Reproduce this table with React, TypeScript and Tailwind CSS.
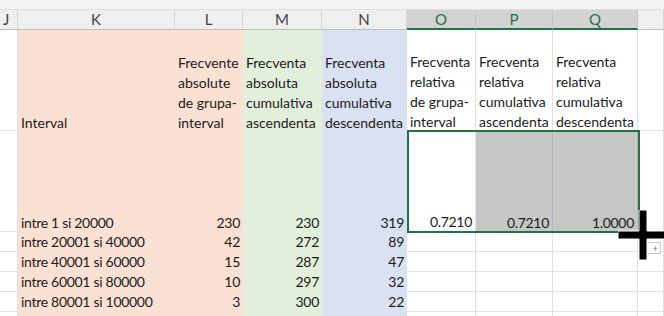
import React from 'react';

const cols = ['J', 'K', 'L', 'M', 'N', 'O', 'P', 'Q', ''];
const selectedCols = ['O', 'P', 'Q'];

const headers: Record<string, string[]> = {
	L: ['Frecvente', 'absolute', 'de grupa-', 'interval'],
	M: ['Frecventa', 'absoluta', 'cumulativa', 'ascendenta'],
	N: ['Frecventa', 'absoluta', 'cumulativa', 'descendenta'],
	O: ['Frecventa', 'relativa', 'de grupa-', 'interval'],
	P: ['Frecventa', 'relativa', 'cumulativa', 'ascendenta'],
	Q: ['Frecventa', 'relativa', 'cumulativa', 'descendenta']
};

const rows = [
	['intre 20001 si 40000', '42', '272', '89'],
	['intre 40001 si 60000', '15', '287', '47'],
	['intre 60001 si 80000', '10', '297', '32'],
	['intre 80001 si 100000', '3', '300', '22'],
	['', '', '', '']
];

const fill: Record<string, string> = {
	K: 'bg-[#fbe1d4]',
	L: 'bg-[#fbe1d4]',
	M: 'bg-[#e2efda]',
	N: 'bg-[#d9e1f2]'
};

function Cell({ col, children, right, gray, h }: { col: string; children?: React.ReactNode; right?: boolean; gray?: boolean; h: string }) {
	const colored = fill[col];
	let cls = colored ? colored : 'bg-white border-r border-b border-[#e1e1e1]';
	if (gray) cls = 'bg-[#c6c6c6] border-r border-[#b8b8b8]';
	return (
		<div className={`${h} ${cls} flex items-end overflow-hidden px-[3px] leading-[20px] whitespace-nowrap ${right ? 'justify-end' : 'justify-start'}`}>
			{children}
		</div>
	);
}

export default function App() {
	return (
		<div className="relative w-[664px] h-[316px] overflow-hidden bg-white text-[14px] text-[#1b1b1b]" style={{ fontFamily: 'Lato, "Open Sans", sans-serif' }}>
			<div className="h-[10px] bg-[#f4f4f4] border-b border-[#dedede]" />
			<div className="grid grid-cols-[18px_157px_68px_79px_85px_69px_77px_85px_26px]">
				{cols.map((c, i) => {
					const sel = selectedCols.includes(c);
					return (
						<div
							key={'h' + i}
							className={`h-[20px] flex items-center justify-center text-[15px] ${
								sel ? 'bg-[#d3d3d3] text-[#217346] border-b-2 border-[#217346] border-r border-r-[#c4c4c4]' : 'bg-[#efefef] text-[#444] border-b border-[#bdbdbd] border-r border-r-[#d6d6d6]'
							} ${i === 0 ? 'justify-start pl-[3px]' : ''}`}
						>
							{c}
						</div>
					);
				})}

				{cols.map((c, i) => (
					<Cell key={'a' + i} col={c} h="h-[101px]">
						{c === 'K' && <div className="translate-y-[2px]">Interval</div>}
						{headers[c] && (
							<div className="translate-y-[2px]">
								{headers[c].map((t) => (
									<div key={t}>{t}</div>
								))}
							</div>
						)}
					</Cell>
				))}

				{cols.map((c, i) => {
					const vals: Record<string, string> = { K: 'intre 1 si 20000', L: '230', M: '230', N: '319', O: '0.7210', P: '0.7210', Q: '1.0000' };
					return (
						<Cell key={'b' + i} col={c} h="h-[101px]" right={c !== 'K'} gray={c === 'P' || c === 'Q'}>
							<span className="tracking-[-0.3px] translate-y-[1px]">{vals[c]}</span>
						</Cell>
					);
				})}

				{rows.map((r, ri) =>
					cols.map((c, i) => {
						let v = '';
						if (c === 'K') v = r[0];
						if (c === 'L') v = r[1];
						if (c === 'M') v = r[2];
						if (c === 'N') v = r[3];
						return (
							<Cell key={ri + '-' + i} col={c} h="h-[20px]" right={c !== 'K'}>
								<span className="tracking-[-0.3px]">{v}</span>
							</Cell>
						);
					})
				)}
			</div>

			{/* selection */}
			<div className="absolute left-[407px] top-[130px] w-[233px] h-[103px] border-2 border-[#217346] pointer-events-none" />

			{/* quick analysis button */}
			<div className="absolute left-[641px] top-[242px] w-[20px] h-[12px] border border-[#c8c8c8] bg-white flex items-center justify-end pr-[2px] text-[9px] leading-none text-[#777]">+</div>

			{/* cursor */}
			<svg className="absolute left-[618px] top-[210px]" width="50" height="50" viewBox="0 0 50 50">
				<path d="M21 0h8v21h21v8H29v21h-8V29H0v-8h21z" fill="#000" stroke="#fff" strokeWidth="1" />
			</svg>
		</div>
	);
}
